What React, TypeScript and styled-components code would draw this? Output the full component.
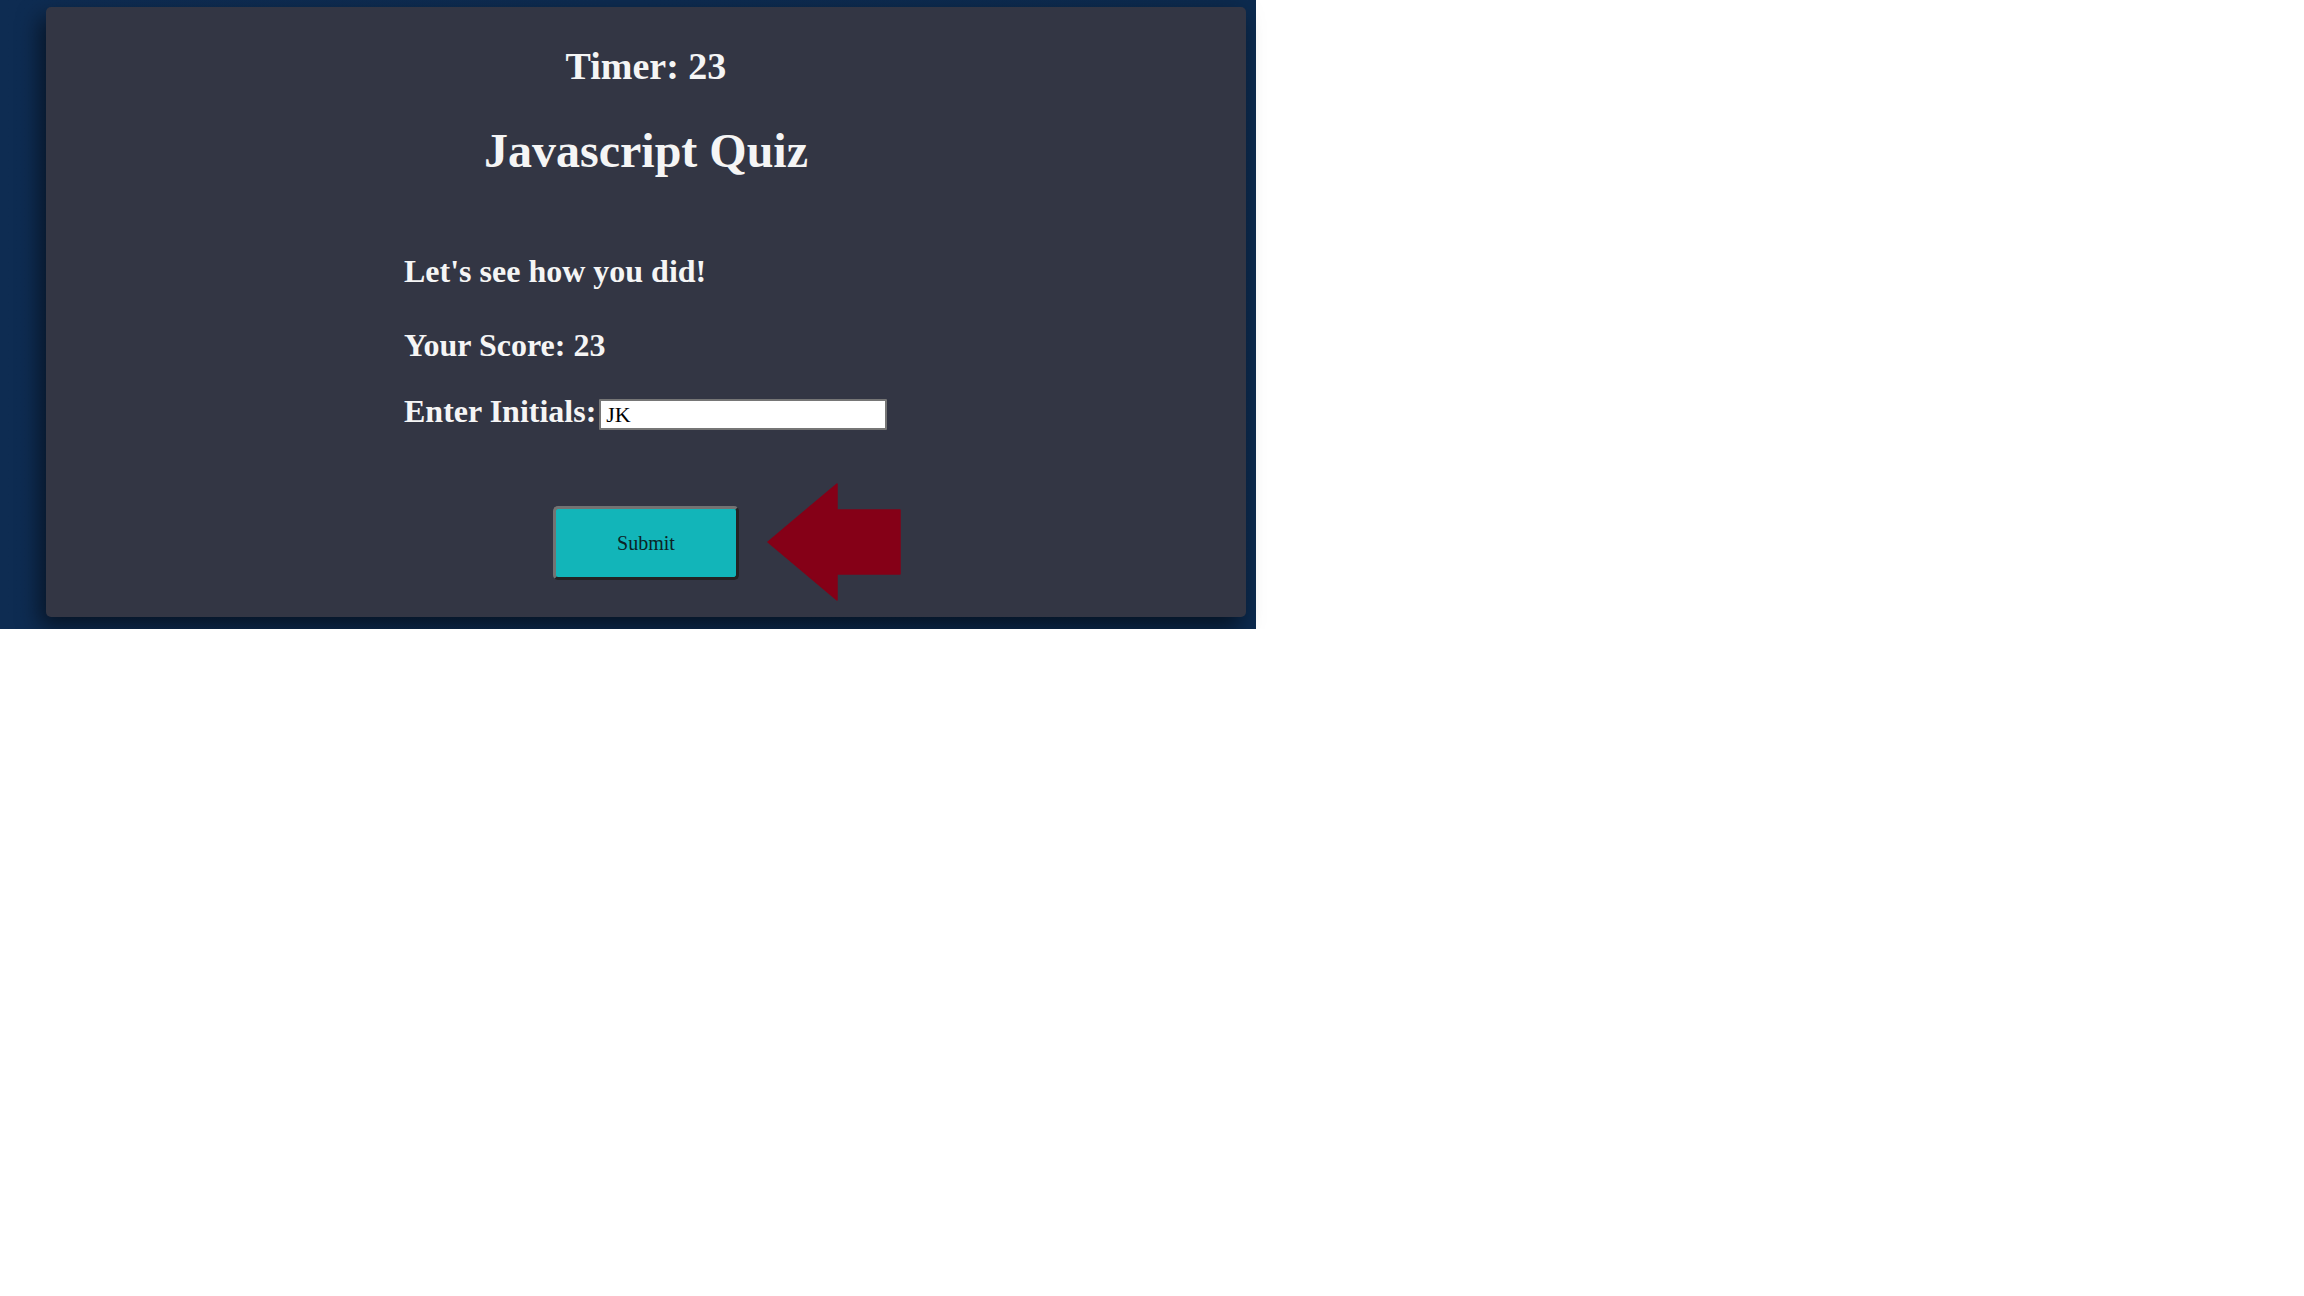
import React from 'react';
import styled, { createGlobalStyle } from 'styled-components';

const GlobalStyle = createGlobalStyle`
  html, body {
    margin: 0;
    padding: 0;
    background: #ffffff;
  }
  body {
    font-family: "Liberation Serif", "Times New Roman", serif;
  }
`;

const Page = styled.div`
  box-sizing: border-box;
  width: 1256px;
  padding: 7px 10px 12px 46px;
  background: linear-gradient(90deg, #0e2c52 0%, #0c2a4e 100%);
`;

const Card = styled.main`
  box-sizing: border-box;
  width: 1200px;
  padding: 37px 0 37px;
  background: #333644;
  border-radius: 5px;
  box-shadow: -6px 10px 22px rgba(0, 0, 0, 0.55);
  color: #f5f5f5;
  display: flex;
  flex-direction: column;
  align-items: center;
`;

const Timer = styled.h2`
  margin: 0;
  font-size: 38px;
  line-height: 44px;
  font-weight: bold;
`;

const Title = styled.h1`
  margin: 35px 0 0;
  font-size: 48px;
  line-height: 56px;
  font-weight: bold;
`;

const Results = styled.section`
  width: 484px;
  margin-top: 73px;
  display: flex;
  flex-direction: column;
`;

const Line = styled.h3<{ $gap?: number }>`
  margin: ${(p) => p.$gap ?? 0}px 0 0;
  font-size: 32px;
  line-height: 38px;
  font-weight: bold;
  white-space: nowrap;
`;

const InitialsRow = styled.label`
  margin-top: 28px;
  display: flex;
  align-items: flex-end;
  gap: 3px;
  font-size: 32px;
  line-height: 38px;
  font-weight: bold;
`;

const LabelText = styled.span`
  flex: none;
  white-space: nowrap;
`;

const InitialsInput = styled.input`
  flex: none;
  box-sizing: border-box;
  width: 288px;
  height: 31px;
  padding: 0 5px;
  border: 2px solid #767676;
  border-radius: 1px;
  background: #ffffff;
  color: #000000;
  font-family: "Liberation Serif", "Times New Roman", serif;
  font-size: 22px;
  outline: none;
`;

const SubmitArea = styled.div`
  position: relative;
  margin-top: 76px;
`;

const SubmitButton = styled.button`
  box-sizing: border-box;
  width: 186px;
  height: 74px;
  background: #12b5b9;
  border-style: solid;
  border-width: 3px;
  border-color: #737373 #232323 #232323 #737373;
  border-radius: 5px;
  color: #0c2326;
  font-family: "Liberation Serif", "Times New Roman", serif;
  font-size: 20px;
  cursor: pointer;
`;

const Pointer = styled.svg`
  position: absolute;
  left: 214px;
  top: -23px;
`;

const PointerArrow = () => (
  <Pointer width="134" height="118" viewBox="0 0 134 118">
    <polygon
      points="1,59 70,1 70,27 133,27 133,91 70,91 70,117"
      fill="#850017"
      stroke="#850017"
      strokeWidth="1.5"
      strokeLinejoin="round"
    />
  </Pointer>
);

export default function App() {
  return (
    <>
      <GlobalStyle />
      <Page>
        <Card>
          <Timer>Timer: 23</Timer>
          <Title>Javascript Quiz</Title>
          <Results>
            <Line>Let's see how you did!</Line>
            <Line $gap={36}>Your Score: 23</Line>
            <InitialsRow>
              <LabelText>Enter Initials:</LabelText>
              <InitialsInput defaultValue="JK" />
            </InitialsRow>
          </Results>
          <SubmitArea>
            <SubmitButton>Submit</SubmitButton>
            <PointerArrow />
          </SubmitArea>
        </Card>
      </Page>
    </>
  );
}
